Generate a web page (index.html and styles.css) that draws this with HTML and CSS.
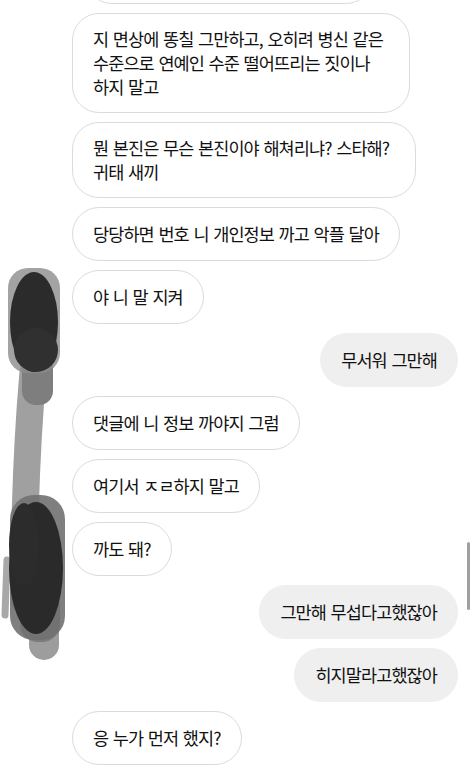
FILE: index.html
```html
<!DOCTYPE html>
<html lang="ko">
<head>
<meta charset="utf-8">
<title>DM</title>
<link rel="stylesheet" href="styles.css">
</head>
<body>
<div class="screen">
  <div class="chat">
    <div class="msg in partial"></div>
    <div class="msg in multi">지 면상에 똥칠 그만하고, 오히려 병신 같은<br>수준으로 연예인 수준 떨어뜨리는 짓이나<br>하지 말고</div>
    <div class="msg in multi">뭔 본진은 무슨 본진이야 해쳐리냐? 스타해?<br>귀태 새끼</div>
    <div class="msg in">당당하면 번호 니 개인정보 까고 악플 달아</div>
    <div class="msg in">야 니 말 지켜</div>
    <div class="msg out">무서워 그만해</div>
    <div class="msg in">댓글에 니 정보 까야지 그럼</div>
    <div class="msg in">여기서 ㅈㄹ하지 말고</div>
    <div class="msg in">까도 돼?</div>
    <div class="msg out">그만해 무섭다고했잖아</div>
    <div class="msg out">히지말라고했잖아</div>
    <div class="msg in">응 누가 먼저 했지?</div>
  </div>

  <svg class="redact" width="80" height="680" viewBox="0 0 80 680" aria-hidden="true">
    <path d="M33 372 Q27 440 25 520 L24 600" stroke="#a0a0a0" stroke-width="27" stroke-linecap="round" fill="none"/>
    <rect x="22" y="352" width="31" height="53" rx="14" fill="#7e7e7e"/>
    <rect x="8" y="268" width="52" height="105" rx="20" fill="#8c8c8c" opacity="0.8"/>
    <ellipse cx="34" cy="322" rx="24" ry="50" fill="#2b2b2b"/>
    <ellipse cx="36" cy="350" rx="22" ry="22" fill="#303030"/>
    <path d="M7 560 L5 615" stroke="#a8a8a8" stroke-width="7" stroke-linecap="round"/>
    <rect x="29" y="598" width="30" height="62" rx="15" fill="#9d9d9d"/>
    <rect x="20" y="590" width="40" height="52" rx="18" fill="#7c7c7c"/>
    <rect x="10" y="495" width="55" height="145" rx="24" fill="#717171" opacity="0.9"/>
    <ellipse cx="36" cy="568" rx="27" ry="66" fill="#2a2a2a"/>
    <ellipse cx="24" cy="545" rx="15" ry="42" fill="#2c2c2c"/>
  </svg>

  <div class="scrollbar"></div>
</div>
</body>
</html>
```

FILE: styles.css
```css
html, body {
  margin: 0;
  padding: 0;
  background: #ffffff;
}

.screen {
  position: relative;
  width: 474px;
  height: 772px;
  overflow: hidden;
  background: #ffffff;
  font-family: "Noto Sans CJK KR", "Noto Sans", sans-serif;
  color: #111111;
}

.chat {
  display: flex;
  flex-direction: column;
  align-items: flex-start;
  gap: 9px;
  padding: 0 16px 0 72px;
}

.msg {
  box-sizing: border-box;
  min-height: 54px;
  padding: 14px 20px;
  font-size: 17.5px;
  line-height: 24px;
  letter-spacing: -0.9px;
  word-spacing: 0.6px;
  border-radius: 27px;
  white-space: nowrap;
}

.multi {
  padding-top: 13px;
  padding-bottom: 13px;
  padding-right: 26px;
}

.in {
  align-self: flex-start;
  background: #ffffff;
  border: 1px solid #dbdbdb;
}

.out {
  align-self: flex-end;
  background: #efefef;
  border: 1px solid #efefef;
}

.partial {
  margin-top: -50px;
  margin-left: 13px;
  width: 288px;
}

.redact {
  position: absolute;
  left: 0;
  top: 0;
}

.scrollbar {
  position: absolute;
  left: 467px;
  top: 542px;
  width: 3px;
  height: 68px;
  border-radius: 2px;
  background: #a0a0a0;
}
```
